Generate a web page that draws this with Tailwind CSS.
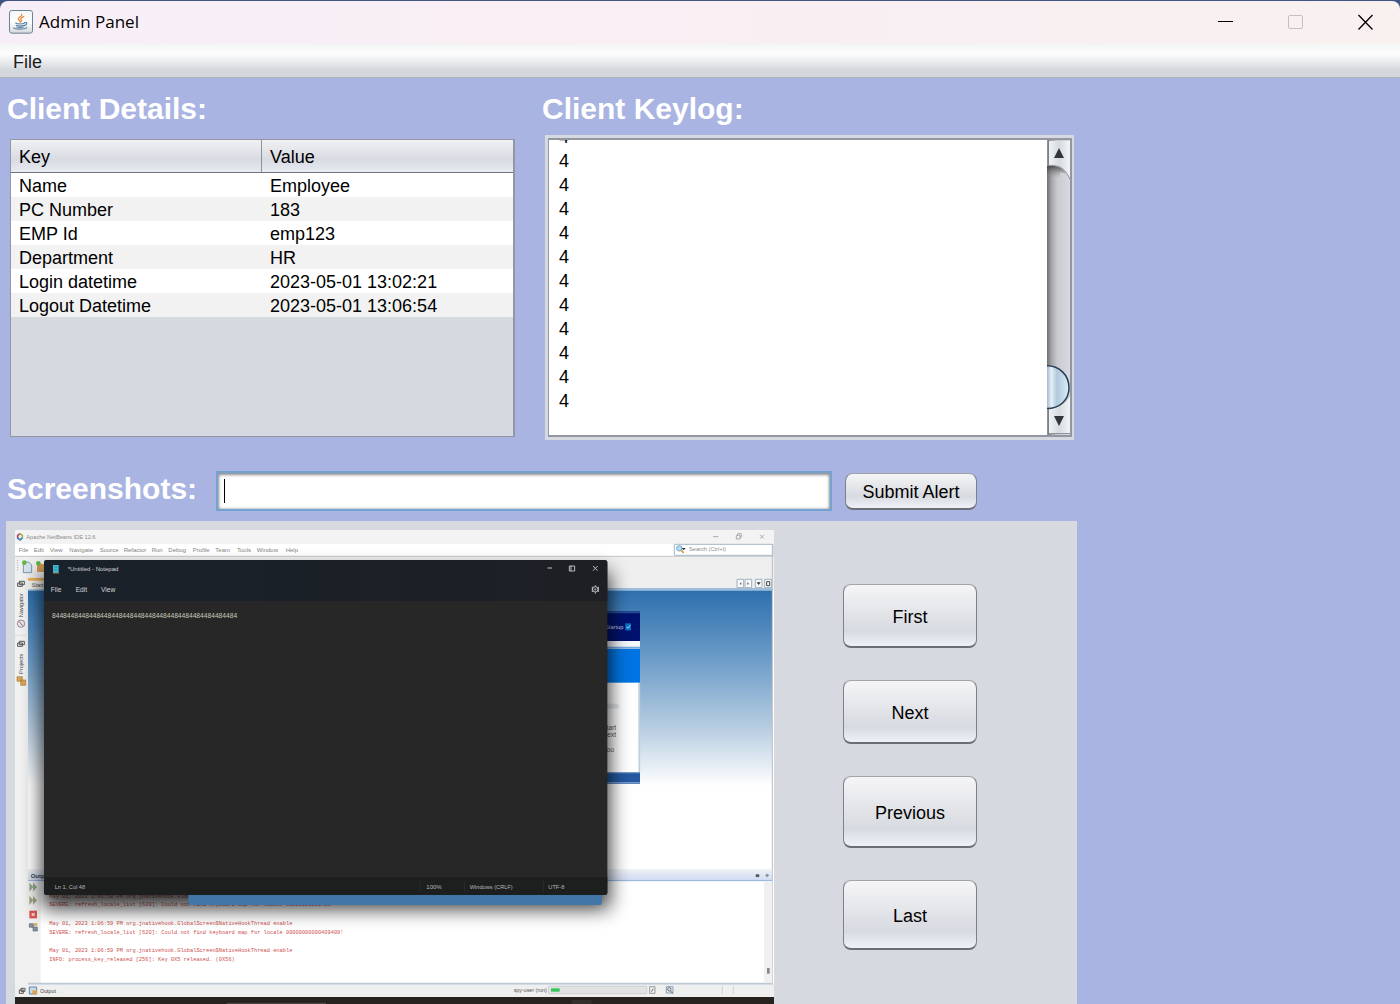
<!DOCTYPE html>
<html lang="en">
<head>
<meta charset="utf-8">
<meta name="viewport" content="width=device-width, initial-scale=1">
<title>Admin Panel</title>
<script src="https://cdn.jsdelivr.net/npm/@tailwindcss/browser@4"></script>
</head>
<body class="bg-[#3f5684] font-['Liberation_Sans',Arial,sans-serif] text-lg text-black">
<div class="flex min-h-screen flex-col pt-px">
  <header class="flex h-[43px] items-center justify-between rounded-t-lg bg-linear-to-r from-[#f8eef7] to-[#f9f0f0] pb-0.5 pl-[9px]">
    <div class="flex items-center gap-1.5">
      <svg class="size-6" viewBox="0 0 72 72" aria-hidden="true">
        <defs><linearGradient id="jb" x1="0" y1="0" x2="0" y2="1"><stop offset="0" stop-color="#f4f5f6"/><stop offset=".5" stop-color="#fff"/><stop offset="1" stop-color="#d4d8dc"/></linearGradient></defs>
        <rect x="1.500" y="1.500" width="69" height="68" rx="7" fill="url(#jb)" stroke="#6c8294" stroke-width="3"/>
        <g fill="none" stroke-linecap="round">
          <path d="M38 13c3 6-11 8-10 14 1 4 6 4 5 9M44 20c-8 3-10 6-7 10 1 2 0 4-2 6" stroke="#ec8a3c" stroke-width="4"/>
          <path d="M20 39c7 3 20 3 27 0M22 46c7 3 17 3 24 0M47 38c8-3 9 6-1 9" stroke="#5580a4" stroke-width="3.500"/>
          <path d="M14 54c9 5 32 4 39-1M23 51c6 2 14 2 20 0" stroke="#6f8da6" stroke-width="3.500"/>
        </g>
      </svg>
      <h1 class="font-['Open_Sans','Noto_Sans',sans-serif] text-[17px] leading-6">Admin Panel</h1>
    </div>
    <div class="flex">
      <button type="button" aria-label="Minimize" class="grid h-10 w-[70px] place-items-center"><svg class="size-4" viewBox="0 0 16 16"><path d="M1 7.500h15" stroke="#000"/></svg></button>
      <button type="button" aria-label="Maximize" disabled class="grid h-10 w-[70px] place-items-center"><svg class="size-4" viewBox="0 0 16 16"><rect x="1.500" y="1.500" width="14" height="13" rx="1.500" fill="none" stroke="#c5bfc0"/></svg></button>
      <button type="button" aria-label="Close" class="grid h-10 w-[70px] place-items-center"><svg class="size-4" viewBox="0 0 16 16"><path d="M1.500 1l14 14.500M15.500 1l-14 14.500" stroke="#000" stroke-width="1.300"/></svg></button>
    </div>
  </header>

  <nav class="flex h-[34px] items-center border-b border-[#b0b3bb] bg-[linear-gradient(#f4f5f5,#fdfdfd_30%,#e6e8ec_58%,#d4d7db_78%,#d4d7db)]">
    <button type="button" class="px-[13px] pt-0.5 leading-6 text-[#1c1c1c]">File</button>
  </nav>

  <main class="flex-1 bg-[#a9b4e2] pl-1.5">
    <div class="max-w-[1071px]">
      <div class="grid grid-cols-[508fr_532fr] gap-[27px] pt-[13px] pr-[3px] pl-px">
        <section>
          <h2 class="text-3xl leading-9 font-bold text-white">Client Details:</h2>
          <div class="mt-3 ml-[3px] h-[298px] border border-r-2 border-[#9297a1] bg-[#d6d9e0]">
            <table class="w-full table-fixed border-separate border-spacing-0 text-left">
              <thead class="bg-linear-to-b from-[#f0f1f3] via-[#d8dbe2] via-60% to-[#e9ecf4] [&_th]:h-[33px] [&_th]:border-b [&_th]:border-b-[#6f747d] [&_th]:px-2 [&_th]:pt-0.5 [&_th]:leading-6 [&_th]:font-normal">
                <tr>
                  <th scope="col" class="border-r border-r-[#8d929b]">Key</th>
                  <th scope="col">Value</th>
                </tr>
              </thead>
              <tbody class="[&_td]:px-2 [&_td]:pt-[3px] [&_td]:leading-[21px]">
                <tr class="bg-white"><td>Name</td><td>Employee</td></tr>
                <tr class="bg-[#f2f2f2]"><td>PC Number</td><td>183</td></tr>
                <tr class="bg-white"><td>EMP Id</td><td>emp123</td></tr>
                <tr class="bg-[#f2f2f2]"><td>Department</td><td>HR</td></tr>
                <tr class="bg-white"><td>Login datetime</td><td>2023-05-01 13:02:21</td></tr>
                <tr class="bg-[#f2f2f2]"><td>Logout Datetime</td><td>2023-05-01 13:06:54</td></tr>
              </tbody>
            </table>
          </div>
        </section>

        <section>
          <h2 class="text-3xl leading-9 font-bold text-white"><label for="keylog">Client Keylog:</label></h2>
          <div class="mt-2 ml-[3px] bg-[#d6d9e0] p-[3px] pr-0.5">
            <div class="flex h-[299px] border-2 border-l border-[#9297a1] bg-white">
              <textarea id="keylog" readonly class="block h-full min-w-0 flex-1 resize-none overflow-hidden bg-white pl-2.5 leading-6 outline-none">4
4
4
4
4
4
4
4
4
4
4
4
4
4
4
4
4
4
4
4
</textarea>
              <svg class="h-full w-[23px] shrink-0" viewBox="0 0 23 296" preserveAspectRatio="none" aria-hidden="true">
                <defs>
                  <linearGradient id="tr"><stop offset="0" stop-color="#6d6e72"/><stop offset=".2" stop-color="#a5a6aa"/><stop offset=".45" stop-color="#c9cacf"/><stop offset="1" stop-color="#d7dae1"/></linearGradient>
                  <linearGradient id="ab"><stop offset="0" stop-color="#eff1f3"/><stop offset=".5" stop-color="#d7dbdf"/><stop offset="1" stop-color="#f3f5f8"/></linearGradient>
                  <linearGradient id="th"><stop offset="0" stop-color="#a3b9cd"/><stop offset=".2" stop-color="#e6eff8"/><stop offset=".45" stop-color="#b2c8dc"/><stop offset="1" stop-color="#d9effa"/></linearGradient>
                  <linearGradient id="sh" x1="0" y1="0" x2="0" y2="1"><stop offset="0" stop-color="#333" stop-opacity=".8"/><stop offset="1" stop-color="#888" stop-opacity="0"/></linearGradient>
                </defs>
                <path d="M0 0h23v296H0z" fill="url(#tr)"/>
                <path d="M2 1h21v38c-4-9-9-13-17-13H2z" fill="url(#ab)"/>
                <path d="M0 26h5c6 0 11 2 14 8l-6-2v6H0z" fill="url(#sh)"/>
                <path d="M0 25.500h5c9 0 14 5 18 14" fill="none" stroke="#8c9097"/>
                <path d="M2 269c10 0 17-4 21-12v38H2z" fill="url(#ab)"/>
                <path d="M0 226.500c12 0 22 9 22 22s-10 21-22 21" fill="url(#th)" stroke="#2a3f55" stroke-width="1.500"/>
                <path d="M12 8l5 10H7zM12 287l5-10H7z" fill="#333638"/>
                <path d="M.5 0v26M.5 270v26M2 294.500h21" stroke="#8d929b"/>
              </svg>
            </div>
          </div>
        </section>
      </div>

      <form class="mt-[31px] flex items-center pr-[100px] pl-px" onsubmit="return false">
        <label for="alert" class="w-[209px] shrink-0 pb-1 text-3xl leading-9 font-bold text-white">Screenshots:</label>
        <div class="relative min-w-0 flex-1">
          <input id="alert" type="text" class="block h-10 w-full border-2 border-[#73a4d1] bg-white px-2 inset-shadow-[0_1px_3px_1px_#8b8b90] outline-none">
          <span class="pointer-events-none absolute top-2 left-2 h-6 w-px bg-black"></span>
        </div>
        <button type="submit" class="ml-[13px] h-[37px] w-[132px] shrink-0 rounded-lg border border-t-[#a0a3a9] border-x-[#7d8086] border-b-2 border-b-[#6b6e74] bg-linear-to-b from-[#f5f5f6] via-[#d7dae0] via-65% to-[#eef1f8] pt-[3px]">Submit Alert</button>
      </form>

      <section class="mt-2.5 flex items-start bg-[#d6d9e0] pt-[9px] pl-[9px]">
        <svg class="block min-w-0 max-w-[759px] flex-1" viewBox="45 1590 2277 1422" role="img" aria-label="Client desktop" font-family="Liberation Sans, Arial, sans-serif">
          <defs>
            <linearGradient id="sky" x1="0" y1="0" x2="0" y2="1"><stop offset="0" stop-color="#2d6fae"/><stop offset=".35" stop-color="#6c9cc8"/><stop offset=".7" stop-color="#b7cde1"/><stop offset="1" stop-color="#fff"/></linearGradient>
            <linearGradient id="oh" x1="0" y1="0" x2="0" y2="1"><stop offset="0" stop-color="#eff2f5"/><stop offset="1" stop-color="#cfdbf3"/></linearGradient>
            <linearGradient id="nh"><stop offset="0" stop-color="#19212a"/><stop offset="1" stop-color="#1d1f24"/></linearGradient>
            <filter id="soft" x="-10%" y="-15%" width="120%" height="135%"><feGaussianBlur stdDeviation="30"/></filter>
          </defs>
          <rect x="45" y="1590" width="2277" height="1422" fill="#fff"/>
          <!-- IDE title, menu and tool bars -->
          <g transform="translate(0 1560)">
            <path d="M45 30h2277v42H45z" fill="#f3f3f3"/>
            <path d="M45 108h2277v105H45z" fill="#efefef"/>
            <path d="M45 109h2277" stroke="#c8c8c8" stroke-width="3"/>
            <path d="M45 111h39v1340H45z" fill="#f0f0f0"/>
            <path d="M84 210h2232v590H84z" fill="url(#sky)"/>
            <path d="M84 208h2232" stroke="#9dbedb" stroke-width="8"/>
            <path d="M84 175h80v33H84z" fill="#f7f5f0"/><path d="M84 178h80" stroke="#f0b557" stroke-width="8"/>
            <g fill="none" stroke-width="5"><path d="M53 56v-10l7-5" stroke="#c33b6e"/><path d="M60 41l7 5v10" stroke="#8bbf3d"/><path d="M53 54l7 6 7-6" stroke="#3b86c4"/></g>
            <text x="79" y="57" font-size="17" fill="#8c8c8c">Apache NetBeans IDE 12.6</text>
            <g font-size="18" fill="#858585">
              <text x="56" y="97">File</text><text x="101" y="97">Edit</text><text x="149" y="97">View</text><text x="208" y="97">Navigate</text><text x="299" y="97">Source</text><text x="371" y="97">Refactor</text><text x="455" y="97">Run</text><text x="505" y="97">Debug</text><text x="578" y="97">Profile</text><text x="646" y="97">Team</text><text x="711" y="97">Tools</text><text x="770" y="97">Window</text><text x="857" y="97">Help</text>
            </g>
            <path d="M53 120v35" stroke="#aaa" stroke-width="3" stroke-dasharray="3 4"/>
            <path d="M70 126h16l9 9v23H70z" fill="#d7e3ec" stroke="#7d98ad" stroke-width="3"/><circle cx="73" cy="128" r="7" fill="#61b546"/>
            <path d="M111 132h24v24h-24z" fill="#d69a55"/><circle cx="115" cy="130" r="7" fill="#61b546"/>
            <text x="95" y="200" font-size="17" fill="#555">Start</text>
            <g fill="#eee" stroke="#555" stroke-width="3"><path d="M58 184h15v10H58zM53 189h14v10H53zM58 364h15v10H58zM53 369h14v10H53z"/></g>
            <g font-size="17" fill="#444"><text transform="translate(70 292) rotate(-90)">Navigator</text><text transform="translate(70 462) rotate(-90)">Projects</text></g>
            <circle cx="63" cy="311" r="11" fill="#e4e6ea" stroke="#8c8c94" stroke-width="3"/><path d="M57 304l11 13" stroke="#c65353" stroke-width="3"/>
            <path d="M45 346h33" stroke="#ddd" stroke-width="3"/>
            <path d="M51 470h16v14H51zM62 480h15v16H62z" fill="#dca252" stroke="#a77d45" stroke-width="2"/>
          </g>
          <!-- search box and welcome page -->
          <g transform="translate(1680 1560)">
            <g fill="none" stroke="#aaa" stroke-width="3"><path d="M459 50h16M529 46h11v11h-11zM533 45v-4h11v11h-4M600 44l12 12M612 44l-12 12"/></g>
            <path d="M343 73h296v33H343z" fill="#fff" stroke="#a4b8c9" stroke-width="3"/>
            <circle cx="358" cy="85" r="8" fill="#b8def5" stroke="#69a5cb" stroke-width="3"/><path d="M364 91l7 8" stroke="#d99b38" stroke-width="5"/><path d="M365 84h12l-6 7z" fill="#333"/>
            <text x="387" y="94" font-size="17" fill="#8d8d8d">Search (Ctrl+I)</text>
            <g fill="#f8f8f8" stroke="#9fb0bf" stroke-width="3"><path d="M531 178h20v25h-20zM555 178h20v25h-20zM586 178h20v25h-20zM614 178h20v25h-20z"/></g>
            <path d="M544 186v9l-5-4zM562 186v9l5-4z" fill="#666"/><path d="M590 187h12l-6 8z" fill="#333"/><path d="M620 185h9v12h-9z" fill="none" stroke="#444" stroke-width="3"/>
            <path d="M120 274h120v90H120z" fill="#01126e"/><path d="M120 277h120" stroke="#284b93" stroke-width="6"/>
            <path d="M120 363h120v24H120z" fill="#f4f8fb"/><path d="M120 383h120" stroke="#72a8df" stroke-width="6"/>
            <path d="M120 387h120v101H120z" fill="#0074e3"/>
            <path d="M120 488h116v270H120z" fill="#fff"/><path d="M238 488v270" stroke="#c1d0df" stroke-width="5"/>
            <path d="M120 758h120v33H120z" fill="#2458a0"/><path d="M120 788h120M120 758h120" stroke="#7398c8" stroke-width="4"/>
            <path d="M120 551h56v15h-56z" fill="#e5e9ed"/>
            <text x="190" y="326" text-anchor="end" font-size="17" fill="#c8d4ec">Startup</text><path d="M196 310h17v21h-17z" fill="#0874c8"/><path d="M200 320l4 5 6-9" fill="none" stroke="#9cd2f8" stroke-width="3"/>
            <g font-size="20" fill="#555" text-anchor="end"><text x="168" y="630">Start</text><text x="168" y="651">Next</text><text x="162" y="697">You</text></g>
            <path d="M637 72v1340" stroke="#b8bdc2" stroke-width="3"/>
          </g>
          <!-- output pane -->
          <g transform="translate(0 2550)">
            <path d="M84 57h2232v35H84z" fill="url(#oh)"/><path d="M84 92h2232" stroke="#92b0db" stroke-width="3"/>
            <text x="92" y="84" font-size="18" font-weight="bold" fill="#345">Output</text>
            <path d="M84 94h38v305H84z" fill="#f0f0f0"/>
            <g fill="#93ae8b"><path d="M88 98l12 13-12 14zM99 98l12 13-12 14z"/></g><g fill="#a2a681"><path d="M88 138l12 13-12 14zM99 138l12 13-12 14z"/></g>
            <path d="M88 182h23v23H88z" fill="#d95555"/><path d="M95 189h9v9h-9z" fill="#f5c5c5"/>
            <path d="M88 221h12v11H88zM99 231h13v12H99z" fill="#8091a8" stroke="#666" stroke-width="2"/><path d="M102 219h10v9h-10z" fill="#dbb66a"/>
            <g font-family="Liberation Mono, monospace" font-size="16" fill="#cc4f4f">
              <text x="148" y="143">May 01, 2023 1:06:58 PM org.jnativehook.GlobalScreen</text>
              <text x="148" y="169">SEVERE: refresh_locale_list [620]: Could not find keyboard map for locale 00000000000409</text>
              <text x="148" y="224">May 01, 2023 1:06:59 PM org.jnativehook.GlobalScreen$NativeHookThread enable</text>
              <text x="148" y="251">SEVERE: refresh_locale_list [620]: Could not find keyboard map for locale 00000000000409409!</text>
              <text x="148" y="306">May 01, 2023 1:06:59 PM org.jnativehook.GlobalScreen$NativeHookThread enable</text>
              <text x="148" y="333">INFO: process_key_released [256]: Key 0X5 released. (0X56)</text>
            </g>
            <path d="M84 401h2232" stroke="#b9c9d7" stroke-width="6"/>
            <path d="M45 404h2277v37H45z" fill="#efefef"/>
            <path d="M45 441h2277v21H45z" fill="#26221f"/><path d="M680 460h298" stroke="#4a4642" stroke-width="4"/><path d="M1715 450h60v12h-60z" fill="#332f2a"/>
            <path d="M63 415h12v9H63zM58 420h12v10H58z" fill="#eee" stroke="#555" stroke-width="3"/>
            <path d="M88 411h22v21H88z" fill="#c8dae8" stroke="#6685a0" stroke-width="3"/><path d="M97 421h14v12H97z" fill="#dca252"/>
            <text x="120" y="429" font-size="16" fill="#444">Output</text>
          </g>
          <g transform="translate(1020 2550)">
            <path d="M1272 94h25v304h-25z" fill="#f0f0f0"/><path d="M1281 354h8v17h-8z" fill="#888"/>
            <path d="M1248 74h9v6h-9zM1276 76h11M1281 71v11" fill="#555" stroke="#555" stroke-width="2"/>
            <text x="521" y="426" font-size="16" fill="#555">spy-user (run)</text>
            <path d="M625 409h295v22H625z" fill="#e2e2e2" stroke="#c6c6c6" stroke-width="2"/><path d="M633 415h26v10h-26z" fill="#35c55a"/>
            <path d="M929 410h16v20h-16z" fill="#eee" stroke="#999" stroke-width="3"/><path d="M934 425l6-9" stroke="#666" stroke-width="3"/>
            <path d="M979 410h20v19h-20z" fill="#e5eaf0" stroke="#8aa0b4" stroke-width="3"/><circle cx="988" cy="418" r="5" fill="none" stroke="#667" stroke-width="3"/><path d="M992 423l6 8" stroke="#667" stroke-width="3"/>
            <path d="M1147 408v25M1180 408v25" stroke="#d3d3d3" stroke-width="3"/>
          </g>
          <!-- Notepad window -->
          <rect x="126" y="1715" width="1702" height="1010" fill="#000" opacity=".8" filter="url(#soft)"/>
          <path d="M565 2680h1241v28q0 7-7 7H572q-7 0-7-7z" fill="#4376a8"/>
          <rect x="132" y="1680" width="1690" height="1005" rx="8" fill="#272727"/>
          <path d="M132 1803v-115q0-8 8-8h1674q8 0 8 8v115z" fill="url(#nh)"/>
          <path d="M132 2632h1690v45q0 8-8 8H140q-8 0-8-8z" fill="#1d1f1f"/>
          <path d="M159 1695h17v24h-17z" fill="#3eb7d2"/><path d="M163 1702h9M163 1709h9" stroke="#1f7f98" stroke-width="2"/><path d="M159 1719h17" stroke="#9b8051" stroke-width="3"/>
          <g font-size="19" fill="#d0d3d6">
            <text x="203" y="1714" font-size="18">*Untitled - Notepad</text>
            <text x="152" y="1777" font-size="20">File</text><text x="227" y="1777" font-size="20">Edit</text><text x="303" y="1777" font-size="20">View</text>
            <text x="156" y="1853" font-size="20" fill="#c9c9bd">84484484484484484484484484484484484484484484484484</text>
          </g>
          <g font-size="18" fill="#b5b7b7"><text x="164" y="2667" font-size="17">Ln 1, Col 48</text><text x="1279" y="2667">100%</text><text x="1409" y="2667" font-size="17">Windows (CRLF)</text><text x="1645" y="2667" font-size="17">UTF-8</text></g>
          <path d="M1260 2642v32M1393 2642v32M1630 2642v32" stroke="#2b2d2d" stroke-width="3"/>
          <g fill="none" stroke="#b9bcbf" stroke-width="3"><path d="M1642 1704h14M1708 1698h16v15h-16zM1713 1698v15M1779 1698l14 14M1793 1698l-14 14"/><circle cx="1786" cy="1768" r="8"/><circle cx="1786" cy="1768" r="2"/><path d="M1786 1756v5M1786 1775v6M1777 1760v16M1795 1760v16"/></g>
        </svg>
        <div class="mr-[100px] ml-[69px] flex w-[134px] shrink-0 flex-col gap-8 pt-[54px] [&>button]:rounded-lg [&>button]:border [&>button]:border-t-[#a0a3a9] [&>button]:border-x-[#7d8086] [&>button]:border-b-2 [&>button]:border-b-[#6b6e74] [&>button]:bg-linear-to-b [&>button]:from-[#f5f5f6] [&>button]:via-[#d7dae0] [&>button]:via-75% [&>button]:to-[#eef1f8] [&>button]:pt-[3px]">
          <button type="button" class="h-16">First</button>
          <button type="button" class="h-16">Next</button>
          <button type="button" class="h-[72px]">Previous</button>
          <button type="button" class="h-[70px]">Last</button>
        </div>
      </section>
    </div>
  </main>
</div>
<script>
  // Show the most recent keystrokes.
  document.getElementById('keylog').scrollTop = 207;
</script>
</body>
</html>
